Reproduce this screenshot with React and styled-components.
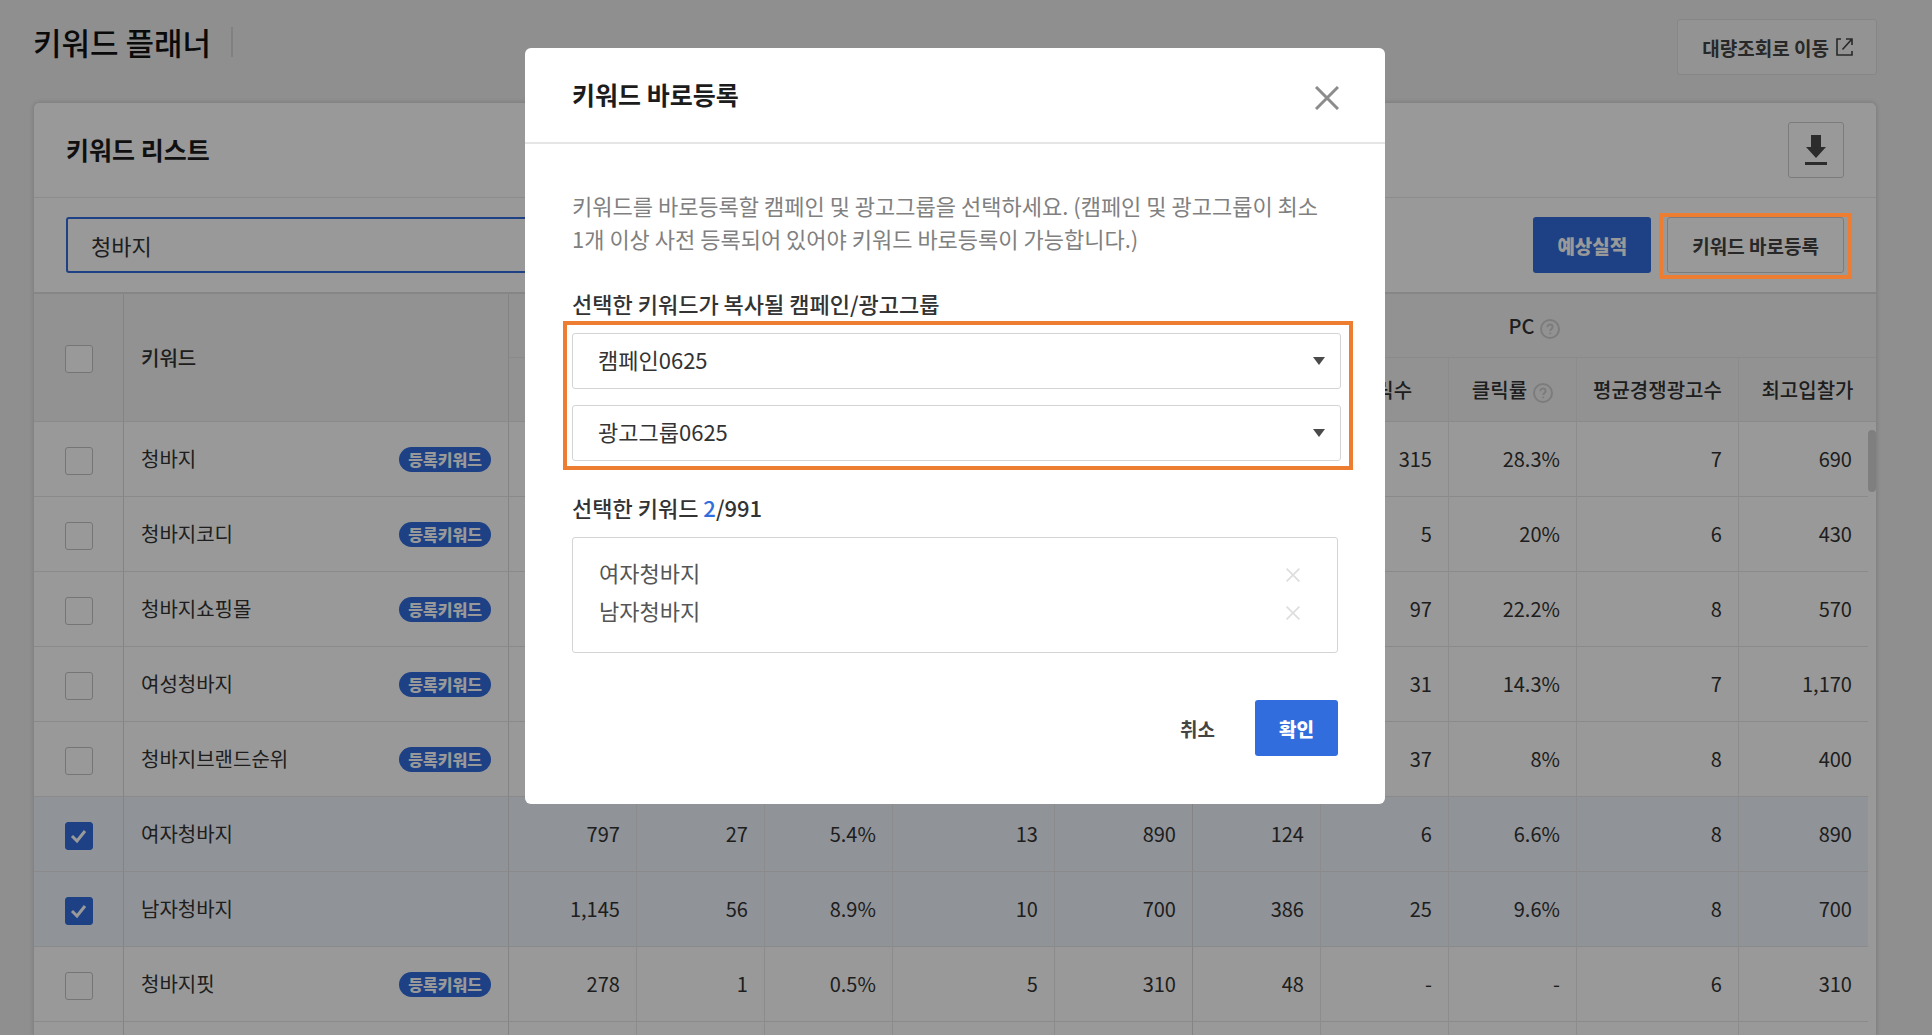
import React, { useState } from 'react'
import styled, { createGlobalStyle } from 'styled-components'

const columns = ['노출수', '클릭수', '클릭률', '평균경쟁광고수', '최고입찰가']
const colWidths = [128, 128, 128, 162, 138, 128, 128, 128, 162, 129]

const keywords = [
  { name: '청바지', registered: true, mobile: [], pc: ['', '315', '28.3%', '7', '690'] },
  { name: '청바지코디', registered: true, mobile: [], pc: ['', '5', '20%', '6', '430'] },
  { name: '청바지쇼핑몰', registered: true, mobile: [], pc: ['', '97', '22.2%', '8', '570'] },
  { name: '여성청바지', registered: true, mobile: [], pc: ['', '31', '14.3%', '7', '1,170'] },
  { name: '청바지브랜드순위', registered: true, mobile: [], pc: ['', '37', '8%', '8', '400'] },
  { name: '여자청바지', mobile: ['797', '27', '5.4%', '13', '890'], pc: ['124', '6', '6.6%', '8', '890'] },
  { name: '남자청바지', mobile: ['1,145', '56', '8.9%', '10', '700'], pc: ['386', '25', '9.6%', '8', '700'] },
  { name: '청바지핏', registered: true, mobile: ['278', '1', '0.5%', '5', '310'], pc: ['48', '-', '-', '6', '310'] },
]

const HelpIcon = () => (
  <HelpSvg viewBox="0 0 20 20" aria-hidden="true">
    <circle cx="10" cy="10" r="9" />
    <path d="M7.4 8.2c0-1.6 1.1-2.6 2.6-2.6s2.6 1 2.6 2.4c0 1.9-2.4 2-2.4 4" />
    <path d="M10.2 13.6v1.6" />
  </HelpSvg>
)

const CrossIcon = ({ size, stroke }) => (
  <svg width={size} height={size} viewBox="0 0 24 24" fill="none" stroke="currentColor" strokeWidth={stroke} aria-hidden="true">
    <path d="M1 1l22 22M23 1L1 23" />
  </svg>
)

const PageHeader = () => (
  <Header>
    <PageTitle>키워드 플래너</PageTitle>
    <LinkButton href="#bulk">
      대량조회로 이동
      <svg width="17" height="18" viewBox="0 0 17 18" fill="none" stroke="currentColor" strokeWidth="1.6" aria-hidden="true">
        <path d="M5 1H1v16h15v-4M10 1h6v6M15.5 1.5L6.5 11.5" />
      </svg>
    </LinkButton>
  </Header>
)

const KeywordTable = ({ selected, onToggle }) => {
  const allChecked = keywords.every(({ name }) => selected.includes(name))

  return (
    <Table>
      <colgroup>
        <Col $width={90} />
        <col />
        {colWidths.map((width, i) => <Col key={i} $width={width} />)}
        <Col $width={8} />
      </colgroup>
      <thead>
        <tr>
          <HeadCell rowSpan={2} $strong>
            <CheckBox type="checkbox" aria-label="전체 선택" checked={allChecked} readOnly />
          </HeadCell>
          <HeadCell rowSpan={2} $strong $left>키워드</HeadCell>
          <HeadCell colSpan={5} $strong aria-label="모바일" />
          <HeadCell colSpan={6} $last><HeadLabel>PC<HelpIcon /></HeadLabel></HeadCell>
        </tr>
        <tr>
          {columns.map((label, i) => (
            <HeadCell key={label} $strong={i === 4}>{label}</HeadCell>
          ))}
          {columns.map((label, i) => (
            <HeadCell key={label} colSpan={i === 4 ? 2 : 1} $last={i === 4}>
              <HeadLabel>{label}{label === '클릭률' && <HelpIcon />}</HeadLabel>
            </HeadCell>
          ))}
        </tr>
      </thead>
      <tbody>
        {keywords.map(({ name, registered, mobile, pc }, index) => {
          const checked = selected.includes(name)
          return (
            <tr key={name}>
              <Cell $strong $center $checked={checked}>
                <CheckBox type="checkbox" aria-label={name} checked={checked} onChange={() => onToggle(name)} />
              </Cell>
              <Cell $strong $checked={checked}>
                <KeywordName>
                  {name}
                  {registered && <Badge>등록키워드</Badge>}
                </KeywordName>
              </Cell>
              {columns.map((label, i) => (
                <Cell key={label} $number $strong={i === 4} $checked={checked}>{mobile[i]}</Cell>
              ))}
              {columns.map((label, i) => (
                <Cell key={label} $number $last={i === 4} $checked={checked}>{pc[i]}</Cell>
              ))}
              {index === 0 && <ScrollTrack rowSpan={keywords.length + 1}><ScrollThumb /></ScrollTrack>}
            </tr>
          )
        })}
        <tr>
          <Cell $strong />
          <Cell $strong />
          {colWidths.map((width, i) => <Cell key={i} $strong={i === 4} $last={i === 9} />)}
        </tr>
      </tbody>
    </Table>
  )
}

const RegisterModal = ({ items, onRemove }) => (
  <Overlay>
    <Modal role="dialog" aria-modal="true" aria-labelledby="modal-title">
      <ModalHeader>
        <SectionTitle id="modal-title">키워드 바로등록</SectionTitle>
        <CloseButton type="button" aria-label="닫기"><CrossIcon size={24} stroke={3} /></CloseButton>
      </ModalHeader>
      <ModalBody>
        <Description>
          키워드를 바로등록할 캠페인 및 광고그룹을 선택하세요. (캠페인 및 광고그룹이 최소 1개 이상 사전 등록되어 있어야 키워드 바로등록이 가능합니다.)
        </Description>
        <Label id="target-label">선택한 키워드가 복사될 캠페인/광고그룹</Label>
        <SelectGroup role="group" aria-labelledby="target-label">
          {['캠페인0625', '광고그룹0625'].map((option) => (
            <SelectBox key={option}>
              <Select aria-label={option} defaultValue={option}>
                <option>{option}</option>
              </Select>
              <Arrow viewBox="0 0 12 8" aria-hidden="true"><path d="M0 0h12L6 8z" /></Arrow>
            </SelectBox>
          ))}
        </SelectGroup>
        <Label>선택한 키워드 <Count>{items.length}</Count>/991</Label>
        <ItemList>
          {items.map((item) => (
            <Item key={item}>
              {item}
              <RemoveButton type="button" aria-label={`${item} 삭제`} onClick={() => onRemove(item)}>
                <CrossIcon size={14} stroke={3} />
              </RemoveButton>
            </Item>
          ))}
        </ItemList>
        <ModalFooter>
          <Button type="button" $plain>취소</Button>
          <Button type="button" $primary>확인</Button>
        </ModalFooter>
      </ModalBody>
    </Modal>
  </Overlay>
)

const App = () => {
  const [selected, setSelected] = useState(['여자청바지', '남자청바지'])

  const toggle = (name) => {
    setSelected(selected.includes(name) ? selected.filter((item) => item !== name) : [...selected, name])
  }

  return (
    <>
      <GlobalStyle />
      <Page>
        <PageHeader />
        <Card>
          <CardHeader>
            <SectionTitle>키워드 리스트</SectionTitle>
            <DownloadButton type="button" aria-label="다운로드">
              <svg width="22" height="30" viewBox="0 0 22 30" fill="currentColor" aria-hidden="true">
                <path d="M6 0h10v12h5L11 23 1 12h5zM0 27h22v3H0z" />
              </svg>
            </DownloadButton>
          </CardHeader>
          <Toolbar>
            <SearchInput type="text" aria-label="키워드 검색" defaultValue="청바지" />
            <Button type="button" $primary>예상실적</Button>
            <Highlight><Button type="button">키워드 바로등록</Button></Highlight>
          </Toolbar>
          <KeywordTable selected={selected} onToggle={toggle} />
        </Card>
      </Page>
      <RegisterModal items={selected} onRemove={toggle} />
    </>
  )
}

const GlobalStyle = createGlobalStyle`
  * {
    box-sizing: border-box;
    margin: 0;
    padding: 0;
  }

  body, button, input, select {
    font-family: "Noto Sans CJK KR", "Noto Sans", sans-serif;
  }

  body {
    background: #eeeeee;
    color: #333333;
    font-size: 20px;
  }
`;

const Page = styled.main`
  display: flex;
  flex-direction: column;
  height: 100vh;
  padding: 19px 55px 0 33px;
  overflow: hidden;
`;

const Header = styled.header`
  display: flex;
  justify-content: space-between;
  align-items: flex-start;
  flex: none;
  height: 83px;
`;

const PageTitle = styled.h1`
  display: flex;
  align-items: center;
  font-size: 31px;
  font-weight: 500;
  line-height: 46px;
  color: #111111;

  &::after {
    content: "";
    width: 2px;
    height: 30px;
    margin-left: 20px;
    background: #d8d8d8;
  }
`;

const LinkButton = styled.a`
  display: flex;
  align-items: center;
  gap: 7px;
  height: 56px;
  padding: 0 23px 0 24px;
  border: 1px solid #e0e0e0;
  border-radius: 3px;
  background: #f5f5f5;
  color: #444444;
  font-size: 19px;
  font-weight: 700;
  text-decoration: none;
`;

const Card = styled.section`
  flex: 1;
  min-height: 0;
  border: 1px solid #dddddd;
  border-bottom: 0;
  border-radius: 6px 6px 0 0;
  background: #ffffff;
  box-shadow: 0 0 4px rgba(0, 0, 0, 0.12);
  overflow: hidden;
`;

const CardHeader = styled.div`
  display: flex;
  justify-content: space-between;
  align-items: center;
  height: 95px;
  padding: 0 32px;
  border-bottom: 1px solid #e9e9e9;
`;

const SectionTitle = styled.h2`
  padding-bottom: 2px;
  font-size: 25px;
  font-weight: 700;
  line-height: 36px;
  color: #1c1c1c;
`;

const Toolbar = styled.div`
  display: flex;
  align-items: center;
  gap: 16px;
  height: 96px;
  padding: 0 32px;
  border-bottom: 2px solid #e0e0e0;
`;

const SearchInput = styled.input`
  flex: 1;
  max-width: 900px;
  height: 56px;
  margin-right: auto;
  padding: 0 23px;
  border: 2px solid #316ddc;
  border-radius: 3px;
  background: #ffffff;
  color: #333333;
  font-size: 22px;
  outline: none;
`;

const Button = styled.button`
  height: 56px;
  padding: 0 24px;
  border: ${({ $primary, $plain }) => ($primary || $plain ? '0' : '1px solid #cfcfcf')};
  border-radius: 3px;
  background: ${({ $primary }) => ($primary ? '#316ddc' : 'transparent')};
  color: ${({ $primary }) => ($primary ? '#ffffff' : '#444444')};
  font-size: 19px;
  font-weight: ${({ $primary }) => ($primary ? 900 : 700)};
  cursor: pointer;
`;

const DownloadButton = styled.button`
  display: flex;
  align-items: center;
  justify-content: center;
  width: 56px;
  height: 56px;
  border: 1px solid #cfcfcf;
  border-radius: 3px;
  background: #ffffff;
  color: #4a4a4a;
`;

/* marker frame, drawn above the dimmed layer */
const Highlight = styled.div`
  position: relative;

  &::after {
    content: "";
    position: absolute;
    z-index: 20;
    inset: -4px -8px -6px;
    border: 4px solid #ed7d31;
    pointer-events: none;
  }
`;

const Table = styled.table`
  width: 100%;
  table-layout: fixed;
  border-spacing: 0;
`;

const Col = styled.col`
  width: ${({ $width }) => $width}px;
`;

const HeadCell = styled.th`
  height: 64px;
  padding: ${({ $left }) => ($left ? '0 17px' : '0')};
  border-bottom: 1px solid #e6e6e6;
  border-right: ${({ $last, $strong }) => ($last ? '0' : $strong ? '1px solid #dcdcdc' : '1px solid #e9e9e9')};
  background: #f4f4f4;
  font-weight: 500;
  line-height: 30px;
  text-align: ${({ $left }) => ($left ? 'left' : 'center')};
`;

const HeadLabel = styled.span`
  display: flex;
  align-items: center;
  justify-content: center;
  gap: 6px;
`;

const HelpSvg = styled.svg`
  width: 20px;
  height: 20px;
  margin-top: 6px;
  fill: none;
  stroke: #cfcfcf;
  stroke-width: 2;
`;

const Cell = styled.td`
  height: 75px;
  padding: ${({ $center, $number }) => ($center ? '0' : $number ? '0 16px' : '0 17px')};
  border-bottom: 1px solid #e6e6e6;
  border-right: ${({ $last, $strong }) => ($last ? '0' : $strong ? '1px solid #dcdcdc' : '1px solid #e9e9e9')};
  background: ${({ $checked }) => ($checked ? '#f0f5fd' : '#ffffff')};
  line-height: 30px;
  text-align: ${({ $number, $center }) => ($number ? 'right' : $center ? 'center' : 'left')};
`;

const KeywordName = styled.div`
  display: flex;
  align-items: center;
  justify-content: space-between;
  white-space: nowrap;
`;

const Badge = styled.span`
  padding: 0 9px;
  border-radius: 13px;
  background: #316ddc;
  color: #ffffff;
  font-size: 16px;
  font-weight: 900;
  line-height: 25px;
`;

const CheckBox = styled.input`
  appearance: none;
  width: 28px;
  height: 28px;
  border: 1px solid #c4c4c4;
  border-radius: 3px;
  background: #ffffff;
  vertical-align: middle;

  &:checked {
    border-color: #316ddc;
    background: #316ddc url("data:image/svg+xml,%3Csvg xmlns='http://www.w3.org/2000/svg' viewBox='0 0 24 24' fill='none' stroke='white' stroke-width='3'%3E%3Cpath d='M5 12l5 5 8-10'/%3E%3C/svg%3E") center / 24px no-repeat;
  }
`;

const ScrollTrack = styled.td`
  padding-top: 8px;
  vertical-align: top;
`;

const ScrollThumb = styled.div`
  height: 62px;
  border-radius: 4px;
  background: #d4d4d4;
`;

/* the right padding keeps the dialog centred on the card */
const Overlay = styled.div`
  position: fixed;
  inset: 0;
  z-index: 10;
  display: flex;
  justify-content: center;
  align-items: flex-start;
  padding: 48px 22px 0 0;
  background: rgba(0, 0, 0, 0.4);
`;

const Modal = styled.div`
  width: 860px;
  max-width: 100%;
  border-radius: 6px;
  background: #ffffff;
`;

const ModalHeader = styled.div`
  display: flex;
  justify-content: space-between;
  align-items: center;
  height: 96px;
  padding: 0 46px 0 47px;
  border-bottom: 2px solid #e5e5e5;
`;

const CloseButton = styled.button`
  display: flex;
  padding-top: 6px;
  border: 0;
  background: none;
  color: #8c8c8c;
`;

const ModalBody = styled.div`
  padding: 45px 47px 48px;
`;

const Description = styled.p`
  margin-bottom: 32px;
  color: #808080;
  font-size: 22px;
  line-height: 33px;
  word-break: keep-all;
`;

const Label = styled.h3`
  font-size: 22px;
  font-weight: 500;
  line-height: 32px;
`;

const Count = styled.span`
  color: #316ddc;
`;

const SelectGroup = styled.div`
  display: grid;
  gap: 16px;
  margin: 2px -15px 21px -9px;
  padding: 8px 8px 5px 5px;
  border: 4px solid #ed7d31;
`;

const SelectBox = styled.div`
  position: relative;
`;

const Select = styled.select`
  appearance: none;
  display: block;
  width: 100%;
  height: 56px;
  padding: 0 25px 4px;
  border: 1px solid #d4d4d4;
  border-radius: 3px;
  background: #ffffff;
  color: #333333;
  font-size: 22px;
`;

const Arrow = styled.svg`
  position: absolute;
  top: 24px;
  right: 16px;
  width: 12px;
  height: 8px;
  fill: #4a4a4a;
  pointer-events: none;
`;

const ItemList = styled.ul`
  height: 116px;
  margin: 14px 0 47px;
  padding: 15px 37px 16px 26px;
  border: 1px solid #d4d4d4;
  border-radius: 3px;
  list-style: none;
`;

const Item = styled.li`
  display: flex;
  justify-content: space-between;
  align-items: center;
  color: #555555;
  font-size: 22px;
  line-height: 38px;
`;

const RemoveButton = styled.button`
  display: flex;
  padding-top: 6px;
  border: 0;
  background: none;
  color: #dedede;
`;

const ModalFooter = styled.div`
  display: flex;
  justify-content: flex-end;
  gap: 16px;
`;

export default App
